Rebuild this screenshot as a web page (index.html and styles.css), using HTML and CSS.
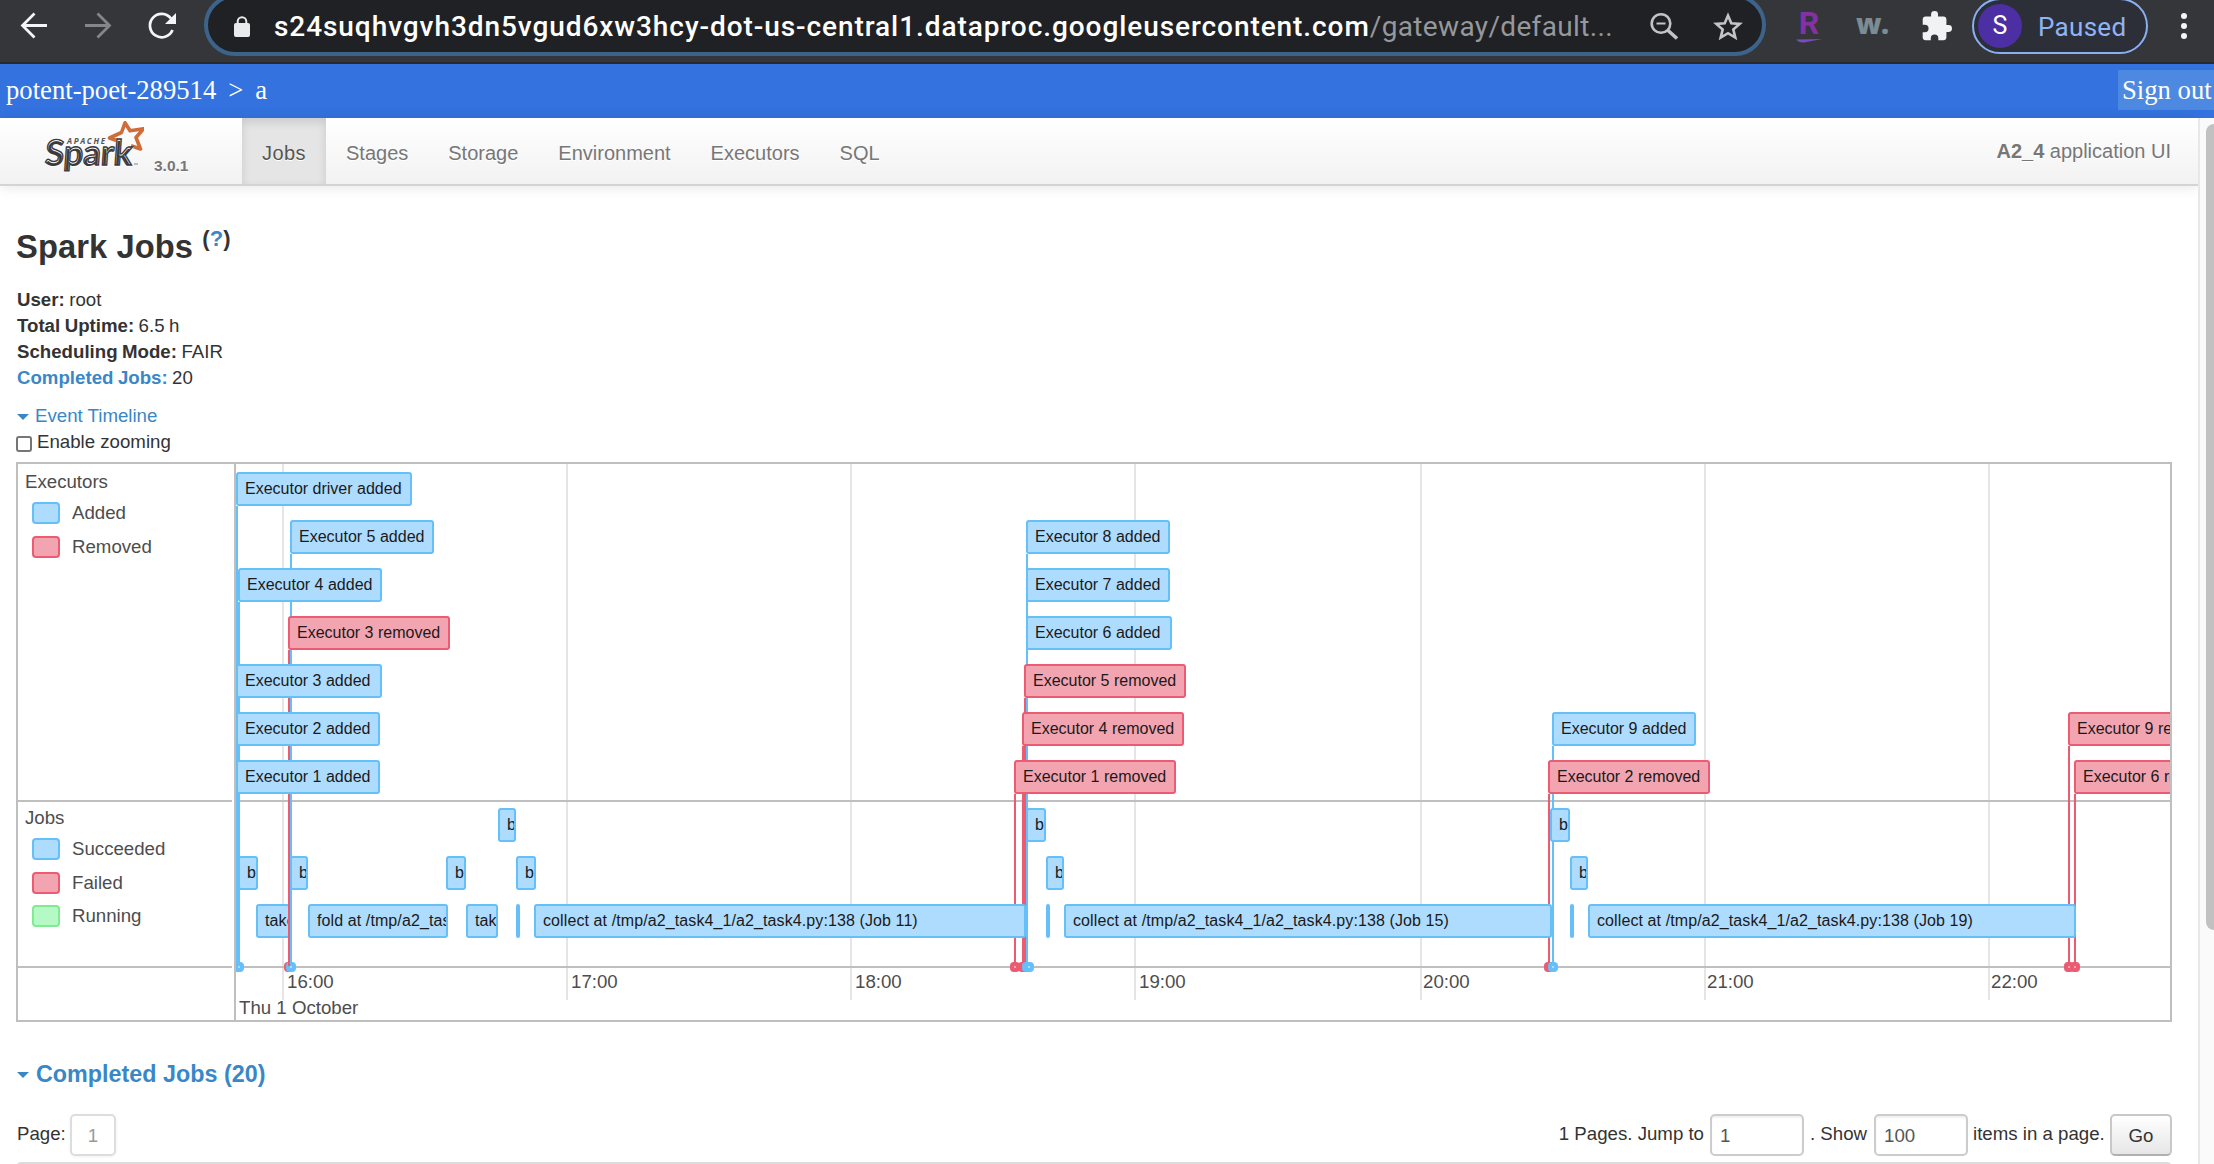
FILE: index.html
```html
<!DOCTYPE html>
<html lang="en">
<head>
<meta charset="utf-8">
<title>A2_4 - Spark Jobs</title>
<link rel="stylesheet" href="styles.css">
</head>
<body>
<header class="browser">
  <svg class="browser-nav" width="204" height="62" viewBox="0 0 204 62" fill="none" stroke-width="2.8">
    <path d="M47 25.5H23M34.500 13.500L22.500 25.500L34.500 37.500" stroke="#f4f5f6"/>
    <path d="M85 25.500H109M97.500 13.500L109.500 25.500L97.500 37.500" stroke="#85868a"/>
    <path d="M171 18.500A11.700 11.700 0 1 0 172.500 30" stroke="#f4f5f6"/>
    <path d="M176 13V24H165Z" fill="#f4f5f6"/>
  </svg>
  <div class="address">
    <svg class="lock" width="16" height="21" viewBox="0 0 16 21"><rect y="7" width="16" height="14" rx="2" fill="#e9eaeb"/><path d="M3.700 8V5.500a4.300 4.300 0 0 1 8.600 0V8" fill="none" stroke="#e9eaeb" stroke-width="2"/></svg>
    <div class="url"><span class="host">s24suqhvgvh3dn5vgud6xw3hcy-dot-us-central1.dataproc.googleusercontent.com</span><span class="path">/gateway/default...</span></div>
    <svg class="address-icons" width="100" height="62" viewBox="1650 0 100 62" fill="none" stroke="#c3c4c6" stroke-width="2.600">
      <circle cx="1661" cy="23.500" r="9.300"/><path d="M1667.500 30L1677 38.500" stroke-width="3.600"/><path d="M1656.500 23.500h9" stroke-width="2"/>
      <path d="M1728 15.500l3.300 7.700 8.400.7-6.400 5.500 2 8.200-7.300-4.400-7.300 4.400 2-8.200-6.400-5.500 8.400-.7z"/>
    </svg>
  </div>
  <div class="ext ext-r">R<svg width="26" height="4" viewBox="0 0 26 4"><path d="M0 0.500L26 0L8 3.500Q3 4 0 0.500Z" fill="#7a4bc0"/></svg></div>
  <div class="ext ext-w">w.</div>
  <svg class="puzzle" width="30" height="30" viewBox="1.500 1 21.500 21.500"><path fill="#f1f2f4" d="M20.500 11H19V7c0-1.100-.9-2-2-2h-4V3.500a2.500 2.500 0 0 0-5 0V5H4c-1.100 0-1.990.9-1.990 2v3.800H3.500a2.700 2.700 0 0 1 0 5.400H2V20c0 1.100.9 2 2 2h3.800v-1.500a2.700 2.700 0 0 1 5.400 0V22H17c1.100 0 2-.9 2-2v-4h1.500a2.500 2.500 0 0 0 0-5z"/></svg>
  <div class="profile"><span class="avatar">S</span><span class="state">Paused</span></div>
  <svg class="kebab" width="6" height="28" viewBox="0 0 6 28" fill="#f4f5f6"><circle cx="3" cy="4" r="3"/><circle cx="3" cy="14" r="3"/><circle cx="3" cy="24" r="3"/></svg>
</header>

<div class="gateway">
  <div class="crumbs"><span>potent-poet-289514</span><span>&gt;</span><span>a</span></div>
  <a class="signout">Sign out</a>
</div>

<div class="viewport">
<div class="page">
  <nav class="navbar">
    <div class="brand">
      <svg width="100" height="66" viewBox="44 118 100 66">
        <path d="M119.500 141.500L109.500 138L121.500 132.500L125 122.800L130 130.800L143.500 128.700L136 137.500L140.500 149L131 145.800" fill="none" stroke="#cf6d3a" stroke-width="3.600" stroke-linejoin="round"/>
        <text class="logo-apache" x="67" y="144" textLength="38">APACHE</text>
        <text class="logo-spark" x="0" y="0" textLength="87" lengthAdjust="spacingAndGlyphs" transform="translate(44.500 165) skewX(-4)">Spark</text>
        <path d="M134 164h4" stroke="#aaa" stroke-width="1.500"/>
      </svg>
      <span class="version">3.0.1</span>
    </div>
    <ul class="tabs">
      <li class="active">Jobs</li><li>Stages</li><li>Storage</li><li>Environment</li><li>Executors</li><li>SQL</li>
    </ul>
    <p class="app-name"><b>A2_4</b> application UI</p>
  </nav>

  <main>
    <h1>Spark Jobs <sup>(<a>?</a>)</sup></h1>
    <ul class="summary">
      <li><b>User:</b> root</li>
      <li><b>Total Uptime:</b> 6.5 h</li>
      <li><b>Scheduling Mode:</b> FAIR</li>
      <li><a><b>Completed Jobs:</b></a> 20</li>
    </ul>
    <div class="toggle"><i class="caret"></i><a>Event Timeline</a></div>
    <label class="zooming"><input type="checkbox"><span>Enable zooming</span></label>

    <section class="timeline">
      <div class="labels">
        <div class="group executors">
          <h2>Executors</h2>
          <p><i class="blue"></i>Added</p>
          <p><i class="red"></i>Removed</p>
        </div>
        <div class="group jobs">
          <h2>Jobs</h2>
          <p><i class="blue"></i>Succeeded</p>
          <p><i class="red"></i>Failed</p>
          <p><i class="green"></i>Running</p>
        </div>
      </div>
      <div class="canvas">
        <i class="hour" style="left:46px"></i><i class="hour" style="left:330px"></i><i class="hour" style="left:614px"></i><i class="hour" style="left:898px"></i><i class="hour" style="left:1184px"></i><i class="hour" style="left:1468px"></i><i class="hour" style="left:1752px"></i>
        <i class="rule group-rule"></i><i class="rule axis-rule"></i>

        <i class="stem blue" style="left:0;top:42px"></i>
        <i class="stem blue" style="left:2px;top:138px"></i>
        <i class="stem blue" style="left:54px;top:90px"></i>
        <i class="stem blue front" style="left:54px;top:330px"></i>
        <i class="stem red" style="left:52px;top:186px"></i>
        <i class="stem red front" style="left:52px;top:330px"></i>
        <i class="stem red" style="left:778px;top:330px"></i>
        <i class="stem red" style="left:786px;top:282px"></i>
        <i class="stem red" style="left:788px;top:234px"></i>
        <i class="stem blue" style="left:790px;top:90px"></i>
        <i class="stem red" style="left:1312px;top:330px"></i>
        <i class="stem blue" style="left:1316px;top:282px"></i>
        <i class="stem red" style="left:1832px;top:282px"></i>
        <i class="stem red" style="left:1838px;top:330px"></i>

        <i class="dot blue" style="left:-2px"></i>
        <i class="dot red" style="left:48px"></i><i class="dot blue" style="left:50px"></i>
        <i class="dot red" style="left:774px"></i><i class="dot red" style="left:782px"></i><i class="dot red" style="left:784px"></i><i class="dot blue" style="left:786px"></i><i class="dot blue" style="left:788px"></i>
        <i class="dot red" style="left:1308px"></i><i class="dot blue" style="left:1312px"></i>
        <i class="dot red" style="left:1828px"></i><i class="dot red" style="left:1834px"></i>

        <div class="item blue r1" style="left:0;width:176px">Executor driver added</div>
        <div class="item blue r2" style="left:54px;width:144px">Executor 5 added</div>
        <div class="item blue r3" style="left:2px;width:144px">Executor 4 added</div>
        <div class="item red r4" style="left:52px;width:162px">Executor 3 removed</div>
        <div class="item blue r5" style="left:0;width:146px">Executor 3 added</div>
        <div class="item blue r6" style="left:0;width:144px">Executor 2 added</div>
        <div class="item blue r7" style="left:0;width:144px">Executor 1 added</div>
        <div class="item blue r2" style="left:790px;width:144px">Executor 8 added</div>
        <div class="item blue r3" style="left:790px;width:144px">Executor 7 added</div>
        <div class="item blue r4" style="left:790px;width:146px">Executor 6 added</div>
        <div class="item red r5" style="left:788px;width:162px">Executor 5 removed</div>
        <div class="item red r6" style="left:786px;width:162px">Executor 4 removed</div>
        <div class="item red r7" style="left:778px;width:162px">Executor 1 removed</div>
        <div class="item blue r6" style="left:1316px;width:144px">Executor 9 added</div>
        <div class="item red r7" style="left:1312px;width:162px">Executor 2 removed</div>
        <div class="item red r6" style="left:1832px;width:162px">Executor 9 removed</div>
        <div class="item red r7" style="left:1838px;width:162px">Executor 6 removed</div>

        <div class="item blue r9" style="left:2px;width:20px">b</div>
        <div class="item blue r10" style="left:20px;width:34px">take</div>
        <div class="item blue r9" style="left:54px;width:18px">b</div>
        <div class="item blue r10" style="left:72px;width:140px">fold at /tmp/a2_tas</div>
        <div class="item blue r9" style="left:210px;width:20px">b</div>
        <div class="item blue r10" style="left:230px;width:32px">tak</div>
        <div class="item blue r8" style="left:262px;width:18px">b</div>
        <div class="item blue r9" style="left:280px;width:20px">b</div>
        <div class="item blue r10 sliver" style="left:280px"></div>
        <div class="item blue r10" style="left:298px;width:492px">collect at /tmp/a2_task4_1/a2_task4.py:138 (Job 11)</div>
        <div class="item blue r8" style="left:790px;width:20px">b</div>
        <div class="item blue r9" style="left:810px;width:18px">b</div>
        <div class="item blue r10 sliver" style="left:810px"></div>
        <div class="item blue r10" style="left:828px;width:488px">collect at /tmp/a2_task4_1/a2_task4.py:138 (Job 15)</div>
        <div class="item blue r8" style="left:1314px;width:20px">b</div>
        <div class="item blue r9" style="left:1334px;width:18px">b</div>
        <div class="item blue r10 sliver" style="left:1334px"></div>
        <div class="item blue r10" style="left:1352px;width:488px">collect at /tmp/a2_task4_1/a2_task4.py:138 (Job 19)</div>

        <span class="tick" style="left:51px">16:00</span><span class="tick" style="left:335px">17:00</span><span class="tick" style="left:619px">18:00</span><span class="tick" style="left:903px">19:00</span><span class="tick" style="left:1187px">20:00</span><span class="tick" style="left:1471px">21:00</span><span class="tick" style="left:1755px">22:00</span>
        <span class="tick day">Thu 1 October</span>
      </div>
    </section>

    <h4><i class="caret"></i><a>Completed Jobs (20)</a></h4>
    <div class="pager">
      <span>Page:</span><span class="page-no">1</span>
      <form class="jump">
        <label>1 Pages. Jump to</label><input type="text" value="1">
        <label class="show">. Show</label><input type="text" value="100">
        <label class="items">items in a page.</label><button type="button">Go</button>
      </form>
    </div>
    <div class="table-top"></div>
  </main>
</div>
<div class="scrollbar"><div class="thumb"></div></div>
</div>
</body>
</html>
```
FILE: styles.css
```css
* { box-sizing: border-box; }
body {
  margin: 0;
  width: 2214px;
  height: 1164px;
  overflow: hidden;
  background: #fff;
  color: #333;
  font: 18.67px/26px "Liberation Sans", Arial, sans-serif;
}
ul, p, h1, h2, h4 { margin: 0; padding: 0; list-style: none; }
a { color: #3a87c8; }
svg { display: block; flex: none; }

/* browser toolbar */
.browser {
  display: flex;
  align-items: flex-start;
  height: 64px;
  overflow: hidden;
  background: #35363a;
  border-bottom: 2px solid #28292b;
  font-family: Roboto, "Liberation Sans", sans-serif;
}
.address {
  display: flex;
  flex: none;
  width: 1562px;
  height: 62px;
  margin-top: -6px;
  border: 4px solid #3c638a;
  border-radius: 31px;
  background: #202124;
}
.lock { margin: 18px 0 0 26px; }
.url {
  width: 1342px;
  margin-left: 24px;
  font-size: 28px;
  line-height: 57px;
  white-space: nowrap;
  color: #fff;
}
.host { font-weight: 500; letter-spacing: 0.93px; }
.path { letter-spacing: 0.35px; color: #96989b; }
.address-icons { margin: 2px 0 0 34px; }
.ext { flex: none; font-weight: 700; }
.ext-r {
  width: 26px;
  margin: 8px 0 0 30px;
  font: 700 32px/31px Roboto, sans-serif;
  text-align: center;
  color: #8530a5;
}
.ext-w {
  width: 33px;
  margin: 6px 0 0 34px;
  font: 800 28px/34px "Open Sans", sans-serif;
  letter-spacing: -0.5px;
  color: #7b8c94;
}
.puzzle { margin: 11px 0 0 33px; }
.profile {
  display: flex;
  flex: none;
  width: 176px;
  height: 56px;
  margin: -2px 0 0 20px;
  border: 2px solid #8ab0f4;
  border-radius: 28px;
  background: #2d2f38;
}
.avatar {
  width: 44px;
  height: 44px;
  margin: 4px 0 0 4px;
  border-radius: 50%;
  background: #4c2fa3;
  color: #fff;
  font-size: 25px;
  line-height: 44px;
  text-align: center;
}
.state { margin-left: 16px; font-size: 26px; line-height: 54px; letter-spacing: 0.3px; color: #8fb3f5; }
.kebab { margin: 12px 0 0 33px; }

/* gateway bar */
.gateway {
  display: flex;
  justify-content: space-between;
  height: 54px;
  background: #3372df;
  color: #fff;
  font: 26.67px/53px "Liberation Serif", "Times New Roman", serif;
}
.crumbs { display: flex; gap: 12px; padding-left: 6px; }
.signout {
  width: 96px;
  height: 40px;
  margin-top: 6px;
  padding-left: 4px;
  background: #4d89e1;
  color: #fff;
  line-height: 41px;
  white-space: nowrap;
}

.viewport { display: flex; height: 1046px; }
.page { width: 2198px; }
.scrollbar { flex: 1; padding: 6px 0 0 6px; background: #fafafa; border-left: 2px solid #e8e8e8; }
.thumb { height: 806px; border-radius: 8px 0 0 8px; background: #c1c1c1; }

/* Spark navigation */
.navbar {
  display: flex;
  height: 68px;
  border-bottom: 2px solid #d4d4d4;
  background: linear-gradient(#fff, #f2f2f2);
  box-shadow: 0 1px 13px rgba(0, 0, 0, 0.1);
  color: #777;
  font-size: 20px;
  text-shadow: 0 1px 0 #fff;
}
.brand { display: flex; width: 242px; padding-left: 44px; }
.logo-apache { font: italic 700 8px "Open Sans", sans-serif; fill: #555; }
.logo-spark { font: 700 35px Lato, sans-serif; fill: #3c3a3e; stroke: #3c3a3e; stroke-width: 1.4; }
.version { margin-left: 10px; font-size: 15.500px; font-weight: 700; line-height: 95px; }
.tabs { display: flex; line-height: 66px; }
.tabs li { padding: 2px 20px 0; }
.tabs .active { width: 84px; background: #e5e5e5; box-shadow: inset 0 4px 10px rgba(0, 0, 0, 0.12); color: #555; letter-spacing: 0.4px; }
.app-name { margin-left: auto; padding-right: 27px; line-height: 66px; }

main { padding: 41px 0 0 16px; }
h1 { height: 40px; font-size: 32.67px; line-height: 40px; letter-spacing: 0.1px; }
sup { position: relative; top: -12px; font-size: 22px; line-height: 0; vertical-align: baseline; }
.summary { margin-top: 20px; padding-left: 1px; word-spacing: -0.7px; }
.toggle { display: flex; margin-top: 12px; }
.caret {
  width: 0;
  height: 0;
  margin: 11px 6px 0 1px;
  border: 6.500px solid transparent;
  border-top-color: #3a87c8;
  border-bottom: 0;
}
.zooming { display: flex; height: 26px; }
.zooming input {
  width: 16px;
  height: 16px;
  margin: 7px 5px 0 0;
  border: 2px solid #767676;
  border-radius: 3px;
  background: #fff;
  appearance: none;
}

/* event timeline */
.timeline {
  display: flex;
  width: 2156px;
  height: 560px;
  margin-top: 7px;
  border: 2px solid #bfbfbf;
  color: #4d4d4d;
}
.labels { width: 218px; border-right: 2px solid #bfbfbf; }
.group { width: 214px; padding: 5px 0 0 7px; border-bottom: 2px solid #bfbfbf; }
.executors { height: 338px; }
.jobs { height: 166px; padding-top: 3px; }
.group h2 { height: 30px; font-size: inherit; font-weight: 400; }
.group p { display: flex; gap: 12px; height: 33.500px; padding-left: 7px; line-height: 28px; }
.group p i { width: 28px; height: 22px; margin: 3px 0 0; border-width: 2px; border-style: solid; border-radius: 4px; }
.jobs h2 { height: 30px; }
.blue { background: #aedcfe; border-color: #65bff9; }
.red { background: #f2a4b1; border-color: #ec5b71; }
.green { background: #b5fac6; border-color: #80eb91; }

.canvas { position: relative; width: 1934px; overflow: hidden; }
.hour { position: absolute; top: 0; width: 2px; height: 536px; background: #e5e5e5; }
.rule { position: absolute; left: 0; right: 0; height: 2px; background: #bfbfbf; }
.group-rule { top: 336px; left: 4px; }
.axis-rule { top: 502px; }
.stem { position: absolute; bottom: 54px; width: 0; border-width: 0 0 0 2px; border-style: solid; }
.stem.front { z-index: 2; }
.dot { position: absolute; top: 498px; width: 10px; height: 10px; border-width: 4px; border-style: solid; border-radius: 4px; }
.item {
  position: absolute;
  height: 34px;
  padding-left: 7px;
  overflow: hidden;
  border-width: 2px;
  border-style: solid;
  border-radius: 3px;
  color: #1a1a1a;
  font-size: 16px;
  line-height: 29px;
  white-space: nowrap;
}
.sliver { width: 4px; padding: 0; }
.r1 { top: 8px; }
.r2 { top: 56px; }
.r3 { top: 104px; }
.r4 { top: 152px; }
.r5 { top: 200px; }
.r6 { top: 248px; }
.r7 { top: 296px; }
.r8 { top: 344px; }
.r9 { top: 392px; }
.r10 { top: 440px; letter-spacing: 0.1px; }
.tick { position: absolute; top: 505px; white-space: nowrap; }
.day { top: 531px; left: 3px; }

/* completed jobs */
h4 { display: flex; margin-top: 39px; font-size: 23.33px; line-height: 27px; }
h4 .caret { margin: 11px 7px 0 1px; }
.pager { display: flex; width: 2156px; height: 42px; margin-top: 26px; padding-left: 1px; line-height: 39px; }
.pager > span:first-child { width: 53px; }
.page-no {
  width: 46px;
  height: 42px;
  border: 2px solid #ddd;
  border-radius: 5px;
  box-shadow: 0 1px 3px rgba(0, 0, 0, 0.06);
  color: #999;
  line-height: 40px;
  text-align: center;
}
.jump { display: flex; margin-left: auto; white-space: nowrap; }
.jump input {
  width: 94px;
  height: 42px;
  margin: 0 0 0 6px;
  padding: 1px 0 0 8px;
  border: 2px solid #ccc;
  border-radius: 5px;
  box-shadow: inset 0 2px 2px rgba(0, 0, 0, 0.06);
  color: #555;
  font: inherit;
}
.show { width: 64px; padding-left: 6px; }
.items { width: 137px; padding-left: 5px; }
.jump button {
  width: 62px;
  height: 42px;
  margin-left: 5px;
  padding: 0;
  border: 2px solid #c8c8c8;
  border-bottom-color: #b0b0b0;
  border-radius: 5px;
  background: linear-gradient(#fff, #e6e6e6);
  color: #333;
  font: inherit;
}
.table-top { width: 2156px; height: 10px; margin-top: 6px; border: 2px solid #ddd; border-radius: 5px 5px 0 0; }
```
